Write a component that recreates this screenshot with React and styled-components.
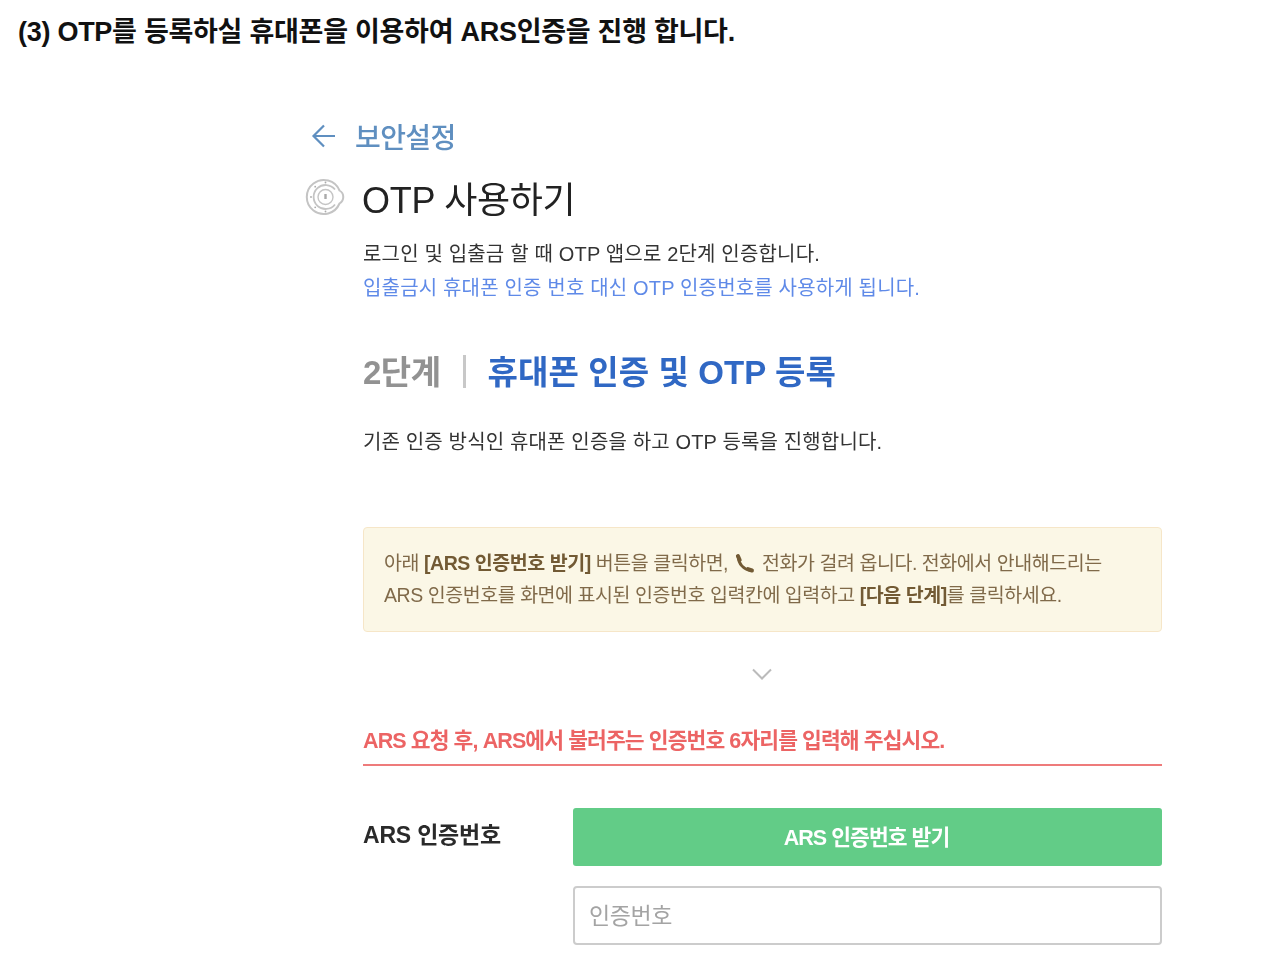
import styled, { createGlobalStyle } from "styled-components";

const Global = createGlobalStyle`
    html, body {
        margin: 0;
        padding: 0;
        background: #fff;
        font-family: "Liberation Sans", "Noto Sans CJK KR", sans-serif;
    }
`
const Page = styled.div`
    width: 1280px;
    height: 958px;
    overflow: hidden;
`
const Caption = styled.h3`
    margin: 0;
    padding: 17px 0 0 18px;
    font-size: 27px;
    line-height: 30px;
    font-weight: 700;
    letter-spacing: -0.27px;
    color: #111;
`
const Shot = styled.div`
    margin: 69px 118px 0 305px;
    filter: blur(0.75px);
`
const BackRow = styled.div`
    display: flex;
    align-items: center;
    gap: 18px;
    height: 40px;
    padding-left: 6px;
    color: #5f8fc0;
    font-size: 28px;
    font-weight: 500;
    letter-spacing: -0.6px;
`
const TitleRow = styled.div`
    display: flex;
    align-items: center;
    gap: 17px;
    height: 54px;
    margin-top: 14px;
`
const Title = styled.h1`
    margin: 0;
    font-size: 36px;
    font-weight: 400;
    letter-spacing: -0.3px;
    color: #222;
`
const Body = styled.div`
    padding-left: 58px;
`
const Lead = styled.p`
    margin: 13px 0 0;
    font-size: 20px;
    line-height: 34px;
    letter-spacing: 0.17px;
    color: #333;
`
const Notice = styled.span`
    display: block;
    color: #5f8ae8;
`
const StepRow = styled.div`
    display: flex;
    align-items: center;
    height: 44px;
    margin-top: 43px;
    font-size: 33px;
    font-weight: 700;
`
const StepNo = styled.span`
    color: #929292;
    letter-spacing: -0.5px;
`
const StepBar = styled.span`
    width: 3px;
    height: 33px;
    margin: 3px 22px 0 22px;
    background: #c8c8c8;
`
const StepName = styled.span`
    color: #3068c4;
    letter-spacing: 0.1px;
`
const Desc = styled.p`
    margin: 33px 0 0;
    font-size: 20px;
    line-height: 34px;
    letter-spacing: 0.15px;
    color: #333;
`
const Alert = styled.div`
    box-sizing: border-box;
    width: 799px;
    height: 105px;
    margin-top: 68px;
    padding: 19px 20px;
    background: #fbf7e6;
    border: 1px solid #f6e6c8;
    border-radius: 4px;
    font-size: 19.5px;
    line-height: 32px;
    letter-spacing: -0.45px;
    color: #806a4a;
    white-space: nowrap;
    b {
        color: #725a34;
    }
`
const PhoneIcon = styled.svg`
    width: 21px;
    height: 21px;
    margin: 0 2px 0 1px;
    vertical-align: -4px;
    fill: none;
    stroke: #725a34;
    stroke-linecap: round;
`
const ChevronWrap = styled.div`
    display: flex;
    justify-content: center;
    width: 798px;
    margin-top: 35px;
    height: 16px;
`
const Warning = styled.div`
    box-sizing: border-box;
    width: 799px;
    height: 58px;
    margin-top: 25px;
    padding-top: 18px;
    border-bottom: 2px solid #ee7b7b;
    font-size: 21.5px;
    line-height: 30px;
    font-weight: 700;
    letter-spacing: -0.9px;
    color: #ec6464;
`
const FormRow = styled.div`
    display: grid;
    grid-template-columns: 210px 589px;
    margin-top: 42px;
`
const FieldLabel = styled.div`
    padding-top: 9px;
    font-size: 23px;
    line-height: 36px;
    font-weight: 700;
    letter-spacing: -0.2px;
    color: #2a2a2a;
`
const Controls = styled.div`
    display: flex;
    flex-direction: column;
    gap: 20px;
`
const GreenButton = styled.button`
    height: 58px;
    padding: 0 2px 3px 0;
    border: none;
    border-radius: 3px;
    background: #62cc87;
    color: #fff;
    font: 700 21.5px "Liberation Sans", "Noto Sans CJK KR", sans-serif;
    letter-spacing: -0.95px;
`
const CodeBox = styled.div`
    box-sizing: border-box;
    height: 59px;
    padding: 0 14px 3px;
    display: flex;
    align-items: center;
    border: 2px solid #ccc;
    border-radius: 4px;
    color: #a4a4a4;
    font-size: 23px;
    letter-spacing: -0.4px;
`

const OtpBadge = () => (
    <svg width="40" height="40" viewBox="0 0 40 40" fill="none" stroke="#c4c4c4">
        <path d="M34.500 26.500a17 17 0 1 1 0-13 7.500 7.500 0 0 1 0 13z" strokeWidth="2" />
        <path d="M30 12.500a12 12 0 1 0 0 15" strokeWidth="1.800" />
        <circle cx="20.500" cy="20" r="7.500" strokeWidth="1.400" />
        <path d="M20.500 17v5" strokeWidth="2.400" stroke="#aaa" />
        <circle cx="20.500" cy="5.500" r="0.900" fill="#aaa" stroke="none" />
        <circle cx="20.500" cy="34.500" r="0.900" fill="#aaa" stroke="none" />
        <circle cx="6" cy="20" r="0.900" fill="#aaa" stroke="none" />
        <circle cx="10.200" cy="9.700" r="0.900" fill="#aaa" stroke="none" />
        <circle cx="10.200" cy="30.300" r="0.900" fill="#aaa" stroke="none" />
    </svg>
)

const App = () => {
    return (
        <Page>
            <Global />
            <Caption>(3) OTP를 등록하실 휴대폰을 이용하여 ARS인증을 진행 합니다.</Caption>
            <Shot>
                <BackRow>
                    <svg width="26" height="26" viewBox="0 0 26 26" fill="none" stroke="#5f8fc0" strokeWidth="2.2">
                        <path d="M24 13H3M13 2.5 2.5 13 13 23.5" />
                    </svg>
                    보안설정
                </BackRow>
                <TitleRow>
                    <OtpBadge />
                    <Title>OTP 사용하기</Title>
                </TitleRow>
                <Body>
                    <Lead>
                        로그인 및 입출금 할 때 OTP 앱으로 2단계 인증합니다.
                        <Notice>입출금시 휴대폰 인증 번호 대신 OTP 인증번호를 사용하게 됩니다.</Notice>
                    </Lead>
                    <StepRow>
                        <StepNo>2단계</StepNo>
                        <StepBar />
                        <StepName>휴대폰 인증 및 OTP 등록</StepName>
                    </StepRow>
                    <Desc>기존 인증 방식인 휴대폰 인증을 하고 OTP 등록을 진행합니다.</Desc>
                    <Alert>
                        아래 <b>[ARS 인증번호 받기]</b> 버튼을 클릭하면,{" "}
                        <PhoneIcon viewBox="0 0 24 24">
                            <path d="M5 5c0 7 6 14 14 15" strokeWidth="3.200" />
                            <path d="M4.500 3.500 6.500 8" strokeWidth="4.600" />
                            <path d="M16 18.500 20.500 20" strokeWidth="4.600" />
                        </PhoneIcon>
                        {" "}전화가 걸려 옵니다. 전화에서 안내해드리는
                        <br />
                        ARS 인증번호를 화면에 표시된 인증번호 입력칸에 입력하고 <b>[다음 단계]</b>를 클릭하세요.
                    </Alert>
                    <ChevronWrap>
                        <svg width="22" height="14" viewBox="0 0 22 14" fill="none" stroke="#bbb" strokeWidth="2">
                            <path d="M2 2.500 11 11.500 20 2.500" />
                        </svg>
                    </ChevronWrap>
                    <Warning>ARS 요청 후, ARS에서 불러주는 인증번호 6자리를 입력해 주십시오.</Warning>
                    <FormRow>
                        <FieldLabel>ARS 인증번호</FieldLabel>
                        <Controls>
                            <GreenButton>ARS 인증번호 받기</GreenButton>
                            <CodeBox>인증번호</CodeBox>
                        </Controls>
                    </FormRow>
                </Body>
            </Shot>
        </Page>
    );
}
export default App;
